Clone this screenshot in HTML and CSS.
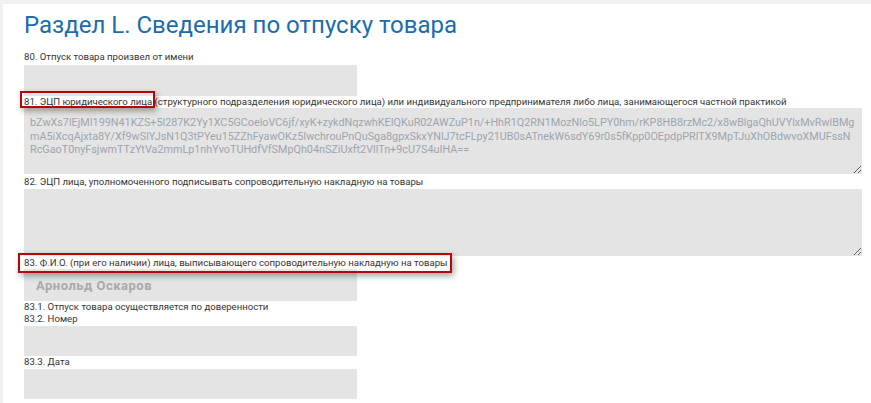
FILE: index.html
```html
<!DOCTYPE html>
<html lang="ru">

<head>
    <meta http-equiv="Content-Type" content="text/html; charset=UTF-8">
    <meta name="viewport" content="width=device-width, initial-scale=1.0">
    <title>Раздел L</title>
    <link rel="stylesheet" href="styles.css">
</head>

<body>
    <div class="panel">
        <h1 class="section-title">Раздел L. Сведения по отпуску товара</h1>

        <label class="field-label">80. Отпуск товара произвел от имени</label>
        <input class="field-input f80" type="text">

        <label class="field-label"><span class="hl hl-81">81. ЭЦП юридического лица</span> (структурного подразделения юридического лица) или индивидуального предпринимателя либо лица, занимающегося частной практикой</label>
        <textarea class="field-area f81">bZwXs7lEjMI199N41KZS+5l287K2Yy1XC5GCoeloVC6jf/xyK+zykdNqzwhKEIQKuR02AWZuP1n/+HhR1Q2RN1MozNlo5LPY0hm/rKP8HB8rzMc2/x8wBlgaQhUVYlxMvRwlBMg
mA5iXcqAjxta8Y/Xf9wSlYJsN1Q3tPYeu15ZZhFyawOKz5IwchrouPnQuSga8gpxSkxYNlJ7tcFLpy21UB0sATnekW6sdY69r0s5fKpp0OEpdpPRlTX9MpTJuXhOBdwvoXMUFssN
RcGaoT0nyFsjwmTTzYtVa2mmLp1nhYvoTUHdfVfSMpQh04nSZiUxft2VllTn+9cU7S4uIHA==</textarea>

        <label class="field-label f82-label">82. ЭЦП лица, уполномоченного подписывать сопроводительную накладную на товары</label>
        <textarea class="field-area f82"></textarea>

        <label class="field-label f83-label"><span class="hl hl-83">83. Ф.И.О. (при его наличии) лица, выписывающего сопроводительную накладную на товары</span></label>
        <input class="field-input f83" type="text" value="Арнольд Оскаров">

        <label class="field-label">83.1. Отпуск товара осуществляется по доверенности</label>
        <label class="field-label">83.2. Номер</label>
        <input class="field-input f832" type="text">

        <label class="field-label">83.3. Дата</label>
        <input class="field-input f833" type="text">
    </div>
</body>

</html>
```

FILE: styles.css
```css
* {
    font-family: Roboto, "Liberation Sans", sans-serif;
}

*,
*::before,
*::after {
    box-sizing: border-box;
}

html,
body {
    margin: 0;
    height: 100%;
    overflow: hidden;
    background-color: #f1f1f1;
}

.panel {
    margin: 4px 0 0 3px;
    min-height: 100%;
    background-color: #fff;
    padding: 7px 9px 0 21px;
}

h1.section-title {
    margin: 0 0 11px;
    font-size: 24px;
    font-weight: 400;
    line-height: 29px;
    color: #1c6cae;
}

.field-label {
    display: block;
    font-size: 9.6px;
    line-height: 12px;
    color: #333;
}

.field-input,
.field-area {
    display: block;
    border: none;
    outline: none;
    background-color: #e4e4e4;
    margin: 2px 0 0;
}

.field-input {
    width: 333px;
    height: 31px;
}

.field-area {
    width: 838px;
    margin-top: 0;
    padding: 8px 6px 6px;
    font-size: 10.8px;
    line-height: 13.5px;
    color: #9ca5af;
    resize: vertical;
    overflow: hidden;
}

.f81 {
    height: 66px;
    margin-bottom: 2px;
}

.f82 {
    height: 67px;
    margin-top: 1px;
}

.f83-label {
    margin-top: 1px;
}

.f83 {
    margin-top: 0;
    height: 32px;
    padding-left: 12px;
    font-size: 13px;
    font-weight: 700;
    letter-spacing: 0.5px;
    color: #a9a9a9;
}

.f832,
.f833 {
    margin-top: 1px;
    height: 30px;
}

/* annotation frames */
.hl {
    position: relative;
}

.hl::before {
    content: "";
    position: absolute;
    border: 2px solid #b50707;
    box-shadow: 2px 3px 6px rgba(0, 0, 0, 0.35);
    z-index: 1;
}

.hl-81::before {
    top: -5px;
    bottom: -1px;
    left: -4px;
    right: -3px;
}

.hl-83::before {
    top: -4px;
    bottom: -5px;
    left: -6px;
    right: -4px;
}
```
